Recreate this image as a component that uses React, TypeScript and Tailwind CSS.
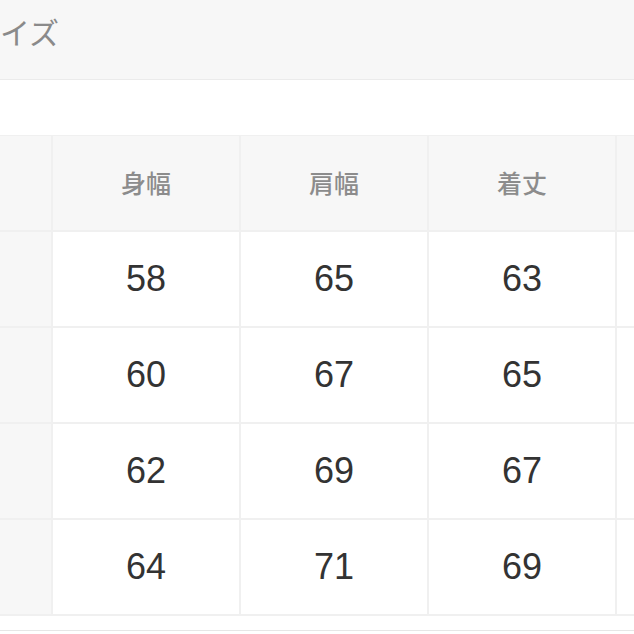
import React from 'react';

const headers = ['身幅', '肩幅', '着丈', ''];

const rows = [
    ['58', '65', '63', ''],
    ['60', '67', '65', ''],
    ['62', '69', '67', ''],
    ['64', '71', '69', ''],
];

const jp = { fontFamily: '"Noto Sans CJK JP", "Noto Sans", sans-serif' };
const num = { fontFamily: '"Liberation Sans", Arial, sans-serif' };

const App = () => {
    return (
        <div className="w-[634px] h-[634px] overflow-hidden bg-white">
            {/* title bar (scrolled, only the tail of the label shows) */}
            <div className="h-[80px] bg-[#f7f7f7] border-b border-[#ebebeb] pt-[16px]">
                <span className="block text-[30px] text-[#8a8a8a] whitespace-nowrap leading-none" style={jp}>
                    イズ
                </span>
            </div>

            <div className="h-[56px] bg-white border-b border-[#f0f0f0]" />

            {/* size table */}
            <div className="grid grid-cols-[51px_186px_186px_186px_186px] gap-[2px] bg-[#f0f0f0] pb-[2px] w-[800px]">
                <div className="h-[94px] bg-[#f7f7f7]" />
                {headers.map((h, i) => (
                    <div
                        key={i}
                        className="h-[94px] bg-[#f7f7f7] flex items-center justify-center text-[25px] text-[#8c8c8c] font-medium"
                        style={jp}
                    >
                        {h}
                    </div>
                ))}
                {rows.map((r, ri) => (
                    <React.Fragment key={ri}>
                        <div className="h-[94px] bg-[#f7f7f7]" />
                        {r.map((v, ci) => (
                            <div
                                key={ci}
                                className="h-[94px] bg-white flex items-center justify-center text-[36px] text-[#333333]"
                                style={num}
                            >
                                {v}
                            </div>
                        ))}
                    </React.Fragment>
                ))}
            </div>

            <div className="h-[15px] bg-white border-b border-[#e6e6e6]" />
        </div>
    );
};

export default App;
